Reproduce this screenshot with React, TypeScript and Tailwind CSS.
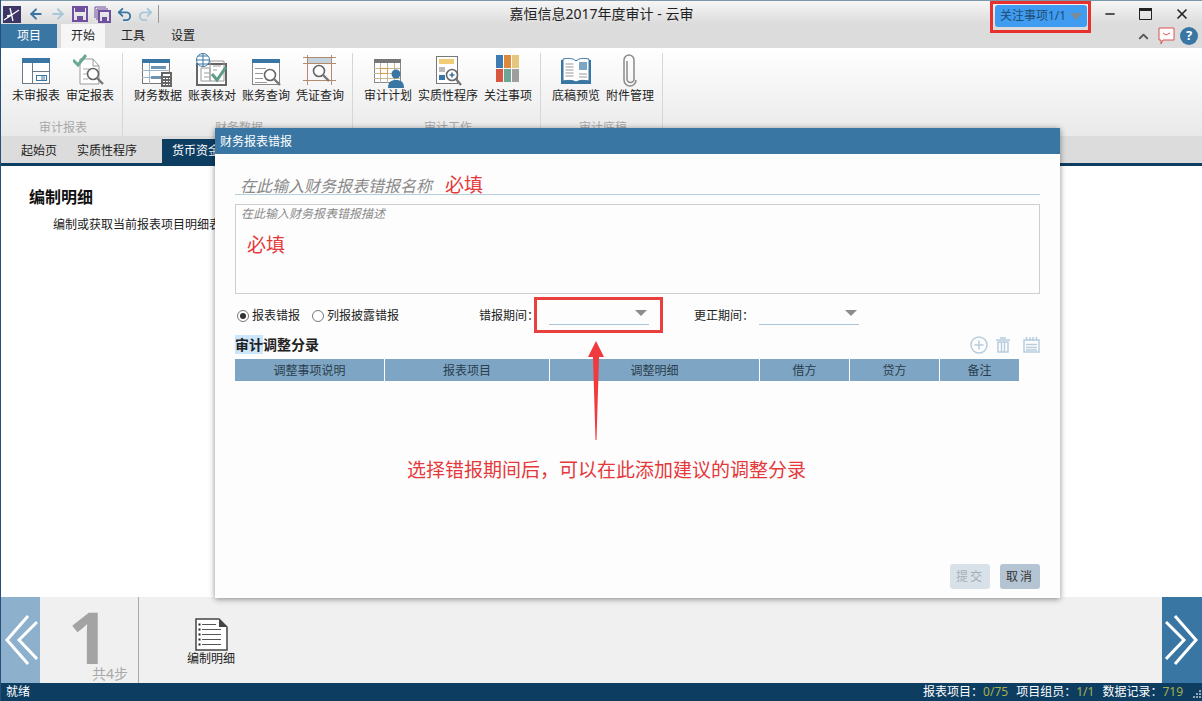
import { ArrowLeft, ArrowRight, ChevronUp, Minus, Redo2, Undo2, X } from 'lucide-react'
import type { ReactNode } from 'react'

type RibbonItem = { label: string; icon: ReactNode; wide?: boolean }

const Page = () => (
  <svg width="34" height="36" viewBox="0 0 34 36"><rect x="3.500" y="5.500" width="27" height="25" fill="#fff" stroke="#6b7a88" /><rect x="3" y="5" width="28" height="5" fill="#3a76a3" /><path d="M13.500 10v21M13.500 18.500h17" stroke="#6b7a88" /><rect x="17.500" y="22.500" width="10" height="5" fill="none" stroke="#3a76a3" /><path d="M22 24h4M22 26h4" stroke="#3a76a3" /></svg>
)
const Loupe = ({ x, y }: { x: number; y: number }) => (
  <g transform={`translate(${x} ${y})`}><circle cx="6" cy="6" r="5.500" fill="#fff" fillOpacity="0.7" stroke="#666" strokeWidth="1.6" /><path d="M10 10l6 6" stroke="#777" strokeWidth="2.400" /></g>
)
const Approved = () => (
  <svg width="34" height="36" viewBox="0 0 34 36"><path d="M7 6h13l6 7v18H7z" fill="#fff" stroke="#999" /><path d="M20 6v7h6" fill="none" stroke="#999" /><path d="M10 16h8M10 21h5M10 26h5" stroke="#aaa" /><path d="M0 7l5 5 8-10" fill="none" stroke="#6aa88f" strokeWidth="3" /><Loupe x={14} y={15} /></svg>
)
const FinanceData = () => (
  <svg width="34" height="36" viewBox="0 0 34 36"><rect x="1.500" y="6.500" width="27" height="24" fill="#fff" stroke="#777" /><rect x="1" y="6" width="28" height="4" fill="#3a76a3" /><path d="M8.500 10v21M1 17.500h28M1 24.500h28" stroke="#9db6ca" /><rect x="10" y="13" width="15" height="3" fill="#6d93b1" /><rect x="10" y="23" width="11" height="3" fill="#6d93b1" /><rect x="20" y="19" width="11" height="15" fill="#666" /><path d="M22 25.500h7M22 28.500h7M22 31.500h7" stroke="#fff" strokeDasharray="2 1" /><rect x="22" y="21" width="7" height="2" fill="#fff" /></svg>
)
const BookCheck = () => (
  <svg width="34" height="36" viewBox="0 0 34 36"><rect x="2" y="11" width="29" height="21" fill="#fff" stroke="#666" strokeWidth="2" /><path d="M15 8h14v20H15zM6 15h9v13H6zM18 13h8M18 17h4M9 20h5M9 24h5" fill="none" stroke="#9a9a9a" /><path d="M17 21l5 6 9-13" fill="none" stroke="#5e9c86" strokeWidth="3" /><circle cx="8" cy="7" r="6.500" fill="#fff" stroke="#3a76a3" /><path d="M1.500 7h13M8 .5v13M3 3h10M3 11h10" stroke="#3a76a3" /></svg>
)
const Query = () => (
  <svg width="34" height="36" viewBox="0 0 34 36"><rect x="3.500" y="6.500" width="27" height="25" fill="#fff" stroke="#888" /><rect x="3" y="6" width="28" height="4" fill="#3a76a3" /><path d="M6 15.500h11M6 20.500h8M6 25.500h8M6 29.500h12" stroke="#999" /><Loupe x={15} y={16} /></svg>
)
const Voucher = () => (
  <svg width="34" height="36" viewBox="0 0 34 36"><path d="M4.500 2v30M28.500 2v30M0 10.500h33M0 27.500h33M0 4.500h33" stroke="#b48a6d" /><rect x="5" y="5" width="23" height="5" fill="#c5d3de" /><Loupe x={10} y={12} /></svg>
)
const Calendar = () => (
  <svg width="34" height="36" viewBox="0 0 34 36"><rect x="3.500" y="6.500" width="26" height="23" fill="#fff" stroke="#888" /><rect x="3" y="6" width="27" height="4" fill="#777" /><path d="M9.500 10v20M16.500 10v20M23.500 10v20M3 15.500h26M3 20.500h26M3 25.500h26" stroke="#c4b89b" /><rect x="9.500" y="15.500" width="7" height="5" fill="none" stroke="#dd9a44" /><circle cx="25" cy="21" r="4.500" fill="#3a76a3" /><path d="M17 35c0-6 3-8 8-8s8 2 8 8z" fill="#3a76a3" /></svg>
)
const Substantive = () => (
  <svg width="34" height="36" viewBox="0 0 34 36"><rect x="5.500" y="3.500" width="21" height="27" fill="#fff" stroke="#777" /><rect x="8" y="6" width="15" height="5" fill="#f0cc74" /><rect x="8" y="14" width="6" height="5" fill="#bbb" /><rect x="8" y="22" width="6" height="5" fill="#3a76a3" /><circle cx="21" cy="22" r="5.500" fill="#fff" stroke="#666" strokeWidth="1.6" /><path d="M18.500 22h5M21 19.500v5" stroke="#3a76a3" strokeWidth="1.6" /><path d="M25 26l5 6" stroke="#777" strokeWidth="2.400" /></svg>
)
const Tiles = () => (
  <svg width="34" height="36" viewBox="0 0 34 36"><rect x="5" y="2" width="7" height="13" fill="#3f7ab0" /><rect x="13" y="2" width="7" height="13" fill="#dd8a3c" /><rect x="21" y="2" width="7" height="13" fill="#e3c67f" /><rect x="5" y="16" width="7" height="13" fill="#d8573f" /><rect x="13" y="16" width="7" height="13" fill="#6fa596" /><rect x="21" y="16" width="7" height="13" fill="#9e9e9e" /></svg>
)
const Book = () => (
  <svg width="34" height="36" viewBox="0 0 34 36"><path d="M2 7h30v24H2z" fill="#3a76a3" /><path d="M4 6c5-1 10-1 13 2 3-3 8-3 13-2v22c-5-1-10-1-13 1-3-2-8-2-13-1z" fill="#fff" stroke="#3a76a3" /><path d="M6.500 11h8M6.500 14h8M6.500 17h8M6.500 20h8M6.500 23h8M20 21h8M20 24h8" stroke="#999" /><rect x="20" y="9" width="8" height="8" fill="#7ea6c4" /></svg>
)
const Clip = () => (
  <svg width="34" height="36" viewBox="0 0 34 36"><path d="M14 8v18a3.500 3.500 0 0 0 7 0V7a5 5 0 0 0-10 0v20a6 6 0 0 0 12 0" fill="none" stroke="#8a8a8a" strokeWidth="1.5" /></svg>
)

const ribbon: { title: string; items: RibbonItem[] }[] = [
  { title: '审计报表', items: [{ label: '未审报表', icon: <Page /> }, { label: '审定报表', icon: <Approved /> }] },
  {
    title: '财务数据',
    items: [
      { label: '财务数据', icon: <FinanceData /> },
      { label: '账表核对', icon: <BookCheck /> },
      { label: '账务查询', icon: <Query /> },
      { label: '凭证查询', icon: <Voucher /> },
    ],
  },
  {
    title: '审计工作',
    items: [
      { label: '审计计划', icon: <Calendar /> },
      { label: '实质性程序', icon: <Substantive />, wide: true },
      { label: '关注事项', icon: <Tiles /> },
    ],
  },
  { title: '审计底稿', items: [{ label: '底稿预览', icon: <Book /> }, { label: '附件管理', icon: <Clip /> }] },
]

const columns = [
  { label: '调整事项说明', width: 'w-[150px]' },
  { label: '报表项目', width: 'w-[165px]' },
  { label: '调整明细', width: 'w-[210px]' },
  { label: '借方', width: 'w-[90px]' },
  { label: '贷方', width: 'w-[90px]' },
  { label: '备注', width: 'w-[79px]' },
]

function Combo({ width }: { width: string }) {
  return (
    <div className={`relative h-[18px] border-b border-[#a9c6da] ${width}`}>
      <span className="absolute right-[2px] top-[3px] h-0 w-0 border-x-[6px] border-t-[6px] border-x-transparent border-t-[#8c8c8c]" />
    </div>
  )
}

function Chevrons({ flip }: { flip?: boolean }) {
  return (
    <svg width="34" height="54" viewBox="0 0 34 54" className={flip ? '-scale-x-100' : ''}>
      <path d="M24 3L3 27l21 24M33 9L15 27l18 19" fill="none" stroke="#fff" strokeWidth="3" />
    </svg>
  )
}

export default function App() {
  return (
    <div className="relative flex h-screen w-screen flex-col overflow-hidden border-l border-[#24507a] bg-white font-['Noto_Sans','Noto_Sans_CJK_SC',sans-serif] text-xs text-[#222]">
      {/* title bar */}
      <div className="grid h-6 shrink-0 grid-cols-[1fr_auto_1fr] border-t border-[#7d97ab] bg-gradient-to-b from-[#f6f6f6] to-[#dcdcdc]">
        <div className="flex items-center pl-[2px]">
          <svg width="18" height="17" viewBox="0 0 18 17"><rect width="18" height="17" fill="#3d3566" /><path d="M1 14L16 4M7 2l3 13M4 10l5-1" stroke="#fff" strokeWidth="1.3" fill="none" /></svg>
          <ArrowLeft size={16} strokeWidth={3} className="ml-[7px] text-[#3a76a3]" />
          <ArrowRight size={16} strokeWidth={3} className="ml-[6px] text-[#a9c6da]" />
          <svg width="16" height="16" viewBox="0 0 16 16" className="ml-[6px]"><path d="M1 1h14v14H1z" fill="none" stroke="#6f4f9f" strokeWidth="2" /><rect x="3" y="2" width="10" height="4" fill="#6f4f9f" /><rect x="5" y="10" width="6" height="5" fill="#6f4f9f" /></svg>
          <svg width="17" height="17" viewBox="0 0 17 17" className="ml-[6px]"><path d="M1 12V1h11M3 14V3h11" fill="none" stroke="#6f4f9f" /><path d="M5 5h11v11H5z" fill="none" stroke="#6f4f9f" strokeWidth="2" /><rect x="8" y="11" width="5" height="5" fill="#6f4f9f" /></svg>
          <Undo2 size={17} strokeWidth={2.6} className="ml-[5px] text-[#3a76a3]" />
          <Redo2 size={17} strokeWidth={2.6} className="ml-[4px] text-[#a9c6da]" />
          <span className="ml-[4px] h-[18px] w-px bg-[#999]" />
        </div>
        <div className="flex items-center justify-center text-sm text-[#222]">嘉恒信息2017年度审计 - 云审</div>
        <div className="flex items-start justify-end">
          <div className="relative z-10 mt-[4px] flex h-[22px] w-[92px] items-center rounded-[3px] bg-[#3f9cf0] pl-[5px] text-[#1f4d73]">
            关注事项1/1
            <span className="ml-[4px] h-0 w-0 border-x-[6px] border-t-[7px] border-x-transparent border-t-[#7d8b96]" />
          </div>
          <div className="ml-[7px] flex h-full w-[108px] items-center justify-between pr-[12px] pl-[9px]">
            <Minus size={14} strokeWidth={2.5} className="text-[#222]" />
            <svg width="13" height="12" viewBox="0 0 13 12"><path d="M.5 .5h12v11H.5z" fill="none" stroke="#222" /><rect width="13" height="3" fill="#222" /></svg>
            <X size={16} strokeWidth={2.5} className="text-[#222]" />
          </div>
        </div>
      </div>

      {/* menu tabs */}
      <div className="flex h-6 shrink-0 items-end justify-between bg-[#dcdcdc]">
        <div className="flex items-stretch">
          <div className="flex h-[24px] w-[56px] items-center justify-center bg-[#3a76a3] text-white">项目</div>
          <div className="ml-[4px] flex h-[24px] w-[44px] items-center justify-center bg-[#f6f6f6]">开始</div>
          <div className="flex w-[56px] items-center justify-center">工具</div>
          <div className="flex w-[44px] items-center justify-center">设置</div>
        </div>
        <div className="flex h-[24px] items-center pr-[4px]">
          <ChevronUp size={15} strokeWidth={3} className="text-[#555]" />
          <svg width="17" height="18" viewBox="0 0 17 18" className="ml-[7px]"><path d="M1 1h15v12H5l-2 4v-4H1z" fill="#fff" stroke="#d9534f" /><path d="M5 6l3 2 4-2" fill="none" stroke="#d9534f" /></svg>
          <span className="ml-[5px] flex h-[18px] w-[18px] items-center justify-center rounded-full bg-[#3a76a3] text-[13px] font-bold text-white">?</span>
        </div>
      </div>

      {/* ribbon */}
      <div className="flex h-[88px] shrink-0 bg-gradient-to-b from-white to-[#e9e9e9] pt-[5px]">
        {ribbon.map(group => (
          <div key={group.title} className="flex flex-col border-r border-[#d6d6d6] pr-[5px] pl-[8px]">
            <div className="flex">
              {group.items.map(item => (
                <div key={item.label} className={`flex flex-col items-center ${item.wide ? 'w-[66px]' : 'w-[54px]'}`}>
                  {item.icon}
                  <span className="-mt-[1px] whitespace-nowrap leading-[16px]">{item.label}</span>
                </div>
              ))}
            </div>
            <div className="mt-[16px] text-center leading-[16px] text-[#a8a8a8]">{group.title}</div>
          </div>
        ))}
      </div>

      {/* document tabs */}
      <div className="flex h-[30px] shrink-0 items-stretch border-b-[3px] border-[#0e3d62] bg-[#dcdcdc] pt-[3px]">
        <div className="flex w-[56px] items-center justify-end">起始页</div>
        <div className="flex w-[80px] items-center justify-end">实质性程序</div>
        <div className="ml-[25px] flex w-[90px] items-center bg-[#0e3d62] pl-[10px] text-white">货币资金</div>
      </div>

      {/* content */}
      <div className="flex-1 px-[28px] pt-[20px]">
        <h1 className="text-base font-bold leading-[22px] text-[#111]">编制明细</h1>
        <p className="mt-[9px] pl-[24px] leading-[16px]">编制或获取当前报表项目明细表</p>
      </div>

      {/* steps */}
      <div className="flex h-[86px] shrink-0 bg-[#f0f0f0]">
        <div className="flex w-[39px] items-center justify-center bg-[#8db1cd]"><Chevrons /></div>
        <div className="relative w-[99px] border-r border-[#aaa]">
          <span className="absolute left-[28px] top-[9px] text-[72px] font-bold leading-[60px] text-[#a3a3a3]">1</span>
          <span className="absolute right-[10px] bottom-[2px] text-sm leading-[14px] text-[#a8a8a8]">共4步</span>
        </div>
        <div className="ml-[48px] flex w-[48px] flex-col items-center pt-[21px]">
          <svg width="33" height="33" viewBox="0 0 33 33"><path d="M1 1h23l8 8v23H1z" fill="#fff" stroke="#444" strokeWidth="1.500" /><path d="M24 1l8 8h-8z" fill="#444" /><path d="M7 6.500h14M7 11.500h19M7 16.500h19M7 21.500h19M7 26.500h19" stroke="#555" /><path d="M3.500 6.500h2M3.500 11.500h2M3.500 16.500h2M3.500 21.500h2M3.500 26.500h2" stroke="#222" strokeWidth="2" /></svg>
          <span className="whitespace-nowrap leading-[16px]">编制明细</span>
        </div>
        <div className="ml-auto flex w-[40px] items-center justify-center bg-[#3a76a3]"><Chevrons flip /></div>
      </div>

      {/* status bar */}
      <div className="flex h-[18px] shrink-0 items-center justify-between bg-[#0e3d62] pl-[5px] text-white">
        <span>就绪</span>
        <span className="flex items-center whitespace-nowrap">
          报表项目：<span className="text-[#a8b04c]">0/75</span>
          <span className="ml-[8px]">项目组员：</span><span className="text-[#a8b04c]">1/1</span>
          <span className="ml-[8px]">数据记录：</span><span className="text-[#a8b04c]">719</span>
          <svg width="10" height="10" viewBox="0 0 10 10" className="ml-[8px] mr-[1px] mt-[4px]"><path d="M8 1h2v2H8zM5 4h2v2H5zM8 4h2v2H8zM2 7h2v2H2zM5 7h2v2H5zM8 7h2v2H8z" fill="#8fa7ba" /></svg>
        </span>
      </div>

      {/* highlighted button marker */}
      <div className="absolute left-[989px] top-[1px] h-[32px] w-[101px] border-[3px] border-[#e8312f]" />

      {/* dialog */}
      <div className="absolute left-[214px] top-[128px] flex h-[470px] w-[845px] flex-col bg-white shadow-[0_1px_6px_rgba(0,0,0,0.45)]">
        <div className="flex h-[26px] items-center bg-[#3a76a3] pl-[5px] pt-[1px] text-white">财务报表错报</div>
        <div className="relative flex flex-1 flex-col bg-[#fdfdfd] px-[20px] pt-[19px]">
          <div className="flex h-[22px] items-center border-b border-[#b6d0e0] pl-[5px] pt-[4px]">
            <span className="text-base italic text-[#8a8a8a]">在此输入财务报表错报名称</span>
            <span className="ml-[13px] text-[19px] text-[#e5383b]">必填</span>
          </div>
          <div className="mt-[9px] h-[90px] border border-[#cfcfcf] pl-[5px] pt-[1px]">
            <div className="italic leading-[16px] text-[#8a8a8a]">在此输入财务报表错报描述</div>
            <div className="mt-[9px] pl-[6px] text-[19px] leading-[28px] text-[#e5383b]">必填</div>
          </div>
          <div className="mt-[13px] flex h-[18px] items-center pl-[2px]">
            <span className="flex h-[12px] w-[12px] items-center justify-center rounded-full border border-[#777] bg-white"><span className="h-[6px] w-[6px] rounded-full bg-[#333]" /></span>
            <span className="ml-[3px]">报表错报</span>
            <span className="ml-[12px] h-[12px] w-[12px] rounded-full border border-[#777] bg-white" />
            <span className="ml-[3px]">列报披露错报</span>
            <span className="ml-[80px] w-[70px]">错报期间：</span>
            <Combo width="w-[100px]" />
            <span className="ml-[45px] w-[65px]">更正期间：</span>
            <Combo width="w-[100px]" />
          </div>
          <div className="mt-[10px] mb-[4px] flex h-[20px] items-center justify-between">
            <span className="text-sm font-bold leading-[18px] text-[#222]"><span className="bg-[#cce6fb]">审计</span>调整分录</span>
            <span className="flex items-center gap-[7px] text-[#b7cddd]">
              <svg width="18" height="18" viewBox="0 0 18 18"><circle cx="9" cy="9" r="8" fill="none" stroke="currentColor" strokeWidth="1.500" /><path d="M9 4.500v9M4.500 9h9" stroke="currentColor" strokeWidth="1.500" /></svg>
              <svg width="16" height="16" viewBox="0 0 16 16"><path d="M1 3h14M5 1h6M3 5h10v10H3zM6.500 5v10M9.500 5v10" fill="none" stroke="currentColor" strokeWidth="1.500" /></svg>
              <svg width="17" height="16" viewBox="0 0 17 16" className="ml-[5px]"><rect x="1" y="3" width="15" height="12" fill="none" stroke="currentColor" strokeWidth="1.500" /><path d="M3.500 0v4M7 0v4M10 0v4M13.500 0v4" stroke="currentColor" strokeWidth="1.500" /><path d="M3 7.500h11M3 10.500h11M3 13h11" stroke="currentColor" strokeWidth="1.500" /></svg>
            </span>
          </div>
          <div className="flex h-[22px] w-[784px]">
            {columns.map(col => (
              <div key={col.label} className={`flex items-center justify-center border-r border-white bg-[#7ea6c4] pt-[1px] text-[#2b3d4d] last:border-r-0 ${col.width}`}>{col.label}</div>
            ))}
          </div>
          <div className="mt-auto mb-[9px] flex justify-end gap-[10px]">
            <div className="flex h-[25px] w-[40px] items-center justify-center rounded-[3px] bg-[#d9e1e8] tracking-[2px] text-[#a5adb4]">提交</div>
            <div className="flex h-[25px] w-[40px] items-center justify-center rounded-[3px] bg-[#b5c4d2] tracking-[2px] text-[#333]">取消</div>
          </div>
          {/* annotations */}
          <div className="absolute left-[319px] top-[143px] h-[36px] w-[129px] border-[3px] border-[#e8403f]" />
          <svg width="16" height="99" viewBox="0 0 16 99" className="absolute left-[373px] top-[187px]">
            <path d="M8 0l8 16h-5L8.500 99h-1L5 16H0z" fill="#f03a3e" />
          </svg>
          <div className="absolute left-[192px] top-[303px] whitespace-nowrap text-[19px] leading-[26px] text-[#e5383b]">选择错报期间后，可以在此添加建议的调整分录</div>
        </div>
      </div>
    </div>
  )
}
